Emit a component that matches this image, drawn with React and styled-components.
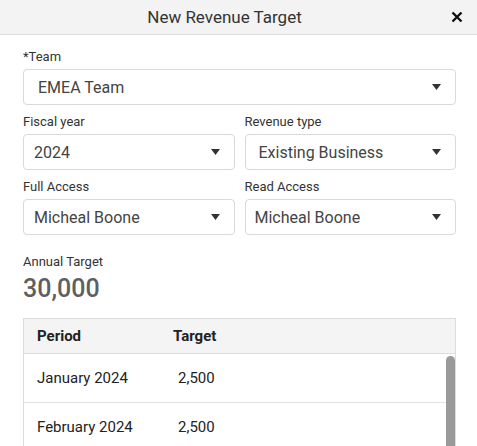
import React from "react";
import styled, { createGlobalStyle } from "styled-components";

const GlobalStyle = createGlobalStyle`
  html, body {
    margin: 0;
    padding: 0;
    background: #ffffff;
    font-family: Roboto, "Liberation Sans", Arial, sans-serif;
    overflow: hidden;
  }
`;

const Modal = styled.div`
  width: 477px;
  height: 446px;
  background: #fff;
  display: flex;
  flex-direction: column;
  overflow: hidden;
`;

const Header = styled.div`
  height: 34px;
  flex: 0 0 34px;
  background: #f3f3f3;
  border-bottom: 1px solid #dcdcdc;
  display: flex;
  align-items: center;
  justify-content: center;
  padding-right: 28px;
  position: relative;
`;

const Title = styled.h1`
  margin: 0;
  font-size: 17px;
  font-weight: 400;
  color: #333;
`;

const Close = styled.button`
  position: absolute;
  right: 14px;
  top: 11px;
  width: 12px;
  height: 12px;
  padding: 0;
  border: 0;
  background: none;
  cursor: pointer;
  display: flex;
`;

const Body = styled.div`
  padding: 14px 21px 0 23px;
  display: flex;
  flex-direction: column;
  flex: 1;
  min-height: 0;
`;

const Row = styled.div`
  display: grid;
  grid-template-columns: ${(p) => (p.$cols === 2 ? "1fr 1fr" : "1fr")};
  column-gap: 10px;
  margin-bottom: ${(p) => p.$mb || 0}px;
`;

const Field = styled.div`
  display: flex;
  flex-direction: column;
`;

const Label = styled.label`
  font-size: 13px;
  color: #333;
  line-height: 16px;
  margin-bottom: 4px;
`;

const Select = styled.div`
  height: 34px;
  border: 1px solid #d9d9d9;
  border-radius: 4px;
  display: flex;
  align-items: center;
  justify-content: space-between;
  padding: 0 14px 0 ${(p) => p.$pad || 10}px;
  font-size: 16px;
  color: #444;
  background: #fff;
`;

const Caret = () => (
  <svg width="9" height="6" viewBox="0 0 9 6">
    <polygon points="0,0 9,0 4.5,6" fill="#333" />
  </svg>
);

const Annual = styled.div`
  margin-top: 19px;
  display: flex;
  flex-direction: column;
`;

const AnnualLabel = styled.div`
  font-size: 13px;
  color: #333;
  line-height: 16px;
`;

const AnnualValue = styled.div`
  font-size: 25px;
  font-weight: 500;
  color: #5f5f5f;
  line-height: 30px;
  margin-top: 4px;
`;

const Table = styled.div`
  margin-top: 14px;
  border: 1px solid #dcdcdc;
  border-bottom: 0;
  display: flex;
  flex-direction: column;
  flex: 1;
  min-height: 0;
`;

const HeadRow = styled.div`
  display: grid;
  grid-template-columns: 136px auto;
  align-items: center;
  height: 34px;
  flex: 0 0 34px;
  padding-left: 13px;
  background: #f4f4f4;
  border-bottom: 1px solid #dcdcdc;
  font-size: 15px;
  font-weight: 700;
  color: #222;
`;

const Scroll = styled.div`
  position: relative;
  flex: 1;
  min-height: 0;
  overflow: hidden;
  padding-right: 9px;
`;

const Thumb = styled.div`
  position: absolute;
  top: 2px;
  right: 0;
  width: 9px;
  height: 140px;
  background: #9a9a9a;
  border-radius: 5px;
`;

const DataRow = styled.div`
  display: grid;
  grid-template-columns: 136px auto;
  align-items: center;
  height: 48px;
  padding-left: 13px;
  border-bottom: 1px solid #e2e2e2;
  font-size: 15px;
  color: #222;
`;

const Value = styled.span`
  padding-left: 5px;
`;

const months = ["January", "February"];

export default function App() {
  return (
    <>
      <GlobalStyle />
      <Modal>
        <Header>
          <Title>New Revenue Target</Title>
          <Close aria-label="Close">
            <svg width="12" height="12" viewBox="0 0 12 12">
              <path d="M1.5 1.5 L10.5 10.5 M10.5 1.5 L1.5 10.5" stroke="#111" strokeWidth="2.4" />
            </svg>
          </Close>
        </Header>
        <Body>
          <Row $mb={9}>
            <Field>
              <Label>*Team</Label>
              <Select $pad={14}>EMEA Team<Caret /></Select>
            </Field>
          </Row>
          <Row $cols={2} $mb={9}>
            <Field>
              <Label>Fiscal year</Label>
              <Select>2024<Caret /></Select>
            </Field>
            <Field>
              <Label>Revenue type</Label>
              <Select $pad={13}>Existing Business<Caret /></Select>
            </Field>
          </Row>
          <Row $cols={2}>
            <Field>
              <Label>Full Access</Label>
              <Select>Micheal Boone<Caret /></Select>
            </Field>
            <Field>
              <Label>Read Access</Label>
              <Select $pad={9}>Micheal Boone<Caret /></Select>
            </Field>
          </Row>
          <Annual>
            <AnnualLabel>Annual Target</AnnualLabel>
            <AnnualValue>30,000</AnnualValue>
          </Annual>
          <Table>
            <HeadRow>
              <span>Period</span>
              <span>Target</span>
            </HeadRow>
            <Scroll>
              {months.map((m) => (
                <DataRow key={m}>
                  <span>{m} 2024</span>
                  <Value>2,500</Value>
                </DataRow>
              ))}
              <Thumb />
            </Scroll>
          </Table>
        </Body>
      </Modal>
    </>
  );
}
